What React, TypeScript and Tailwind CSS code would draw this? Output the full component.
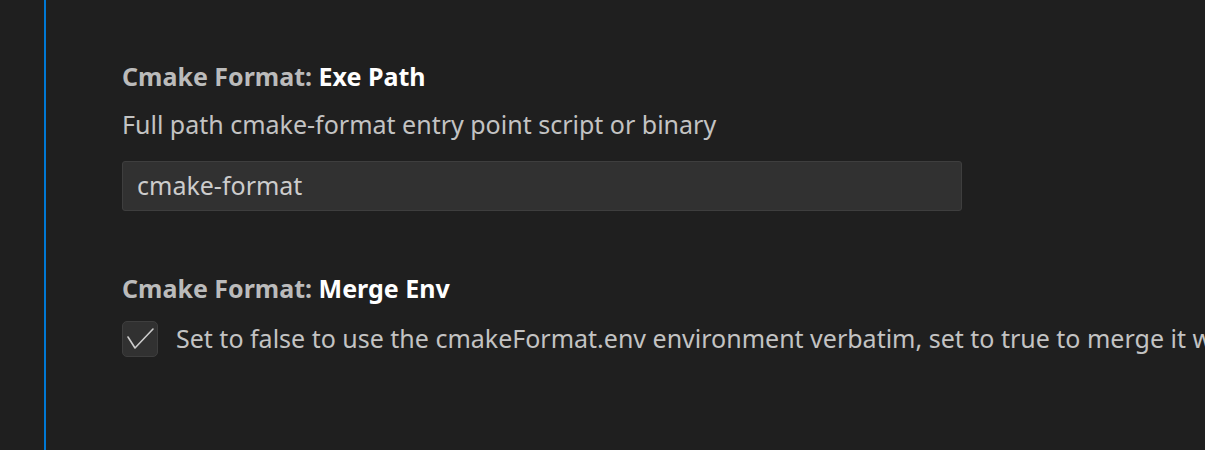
export default function App() {
  return (
    <div className="h-[450px] w-[1205px] overflow-hidden bg-[#1f1f1f] flex" style={{ fontFamily: '"Noto Sans", "Open Sans", sans-serif' }}>
      <div className="w-[44px] shrink-0" />
      <div className="w-[2px] shrink-0 bg-[#0078d4]" />
      <div className="flex-1 min-w-0 pl-[76px] pt-[59px]">
        <div className="text-[25px] leading-[34px] font-bold text-[#bbbbbb] whitespace-nowrap">
          Cmake Format: <span className="text-[#ffffff]">Exe Path</span>
        </div>
        <div className="mt-[14px] text-[25px] leading-[34px] text-[#c3c3c3] whitespace-nowrap">
          Full path cmake-format entry point script or binary
        </div>
        <div className="mt-[20px] w-[840px] h-[50px] rounded-[3px] bg-[#313131] border border-[#3e3e3e] flex items-center px-[14px] text-[25px] text-[#cccccc]">
          cmake-format
        </div>
        <div className="mt-[60px] text-[25px] leading-[34px] font-bold text-[#bbbbbb] whitespace-nowrap">
          Cmake Format: <span className="text-[#ffffff]">Merge Env</span>
        </div>
        <div className="mt-[16px] flex items-center gap-[18px] whitespace-nowrap">
          <div className="w-[36px] h-[36px] shrink-0 rounded-[5px] bg-[#313131] border border-[#3e3e3e]">
            <svg width="34" height="34" viewBox="0 0 34 34" fill="none" stroke="#cccccc" strokeWidth="1.6" strokeLinecap="round" strokeLinejoin="round">
              <path d="M5 15 L12 26 L30 7" />
            </svg>
          </div>
          <div className="text-[25px] leading-[34px] text-[#c3c3c3] -mt-[2px]">
            Set to false to use the cmakeFormat.env environment verbatim, set to true to merge it with the system environment.
          </div>
        </div>
      </div>
    </div>
  );
}
